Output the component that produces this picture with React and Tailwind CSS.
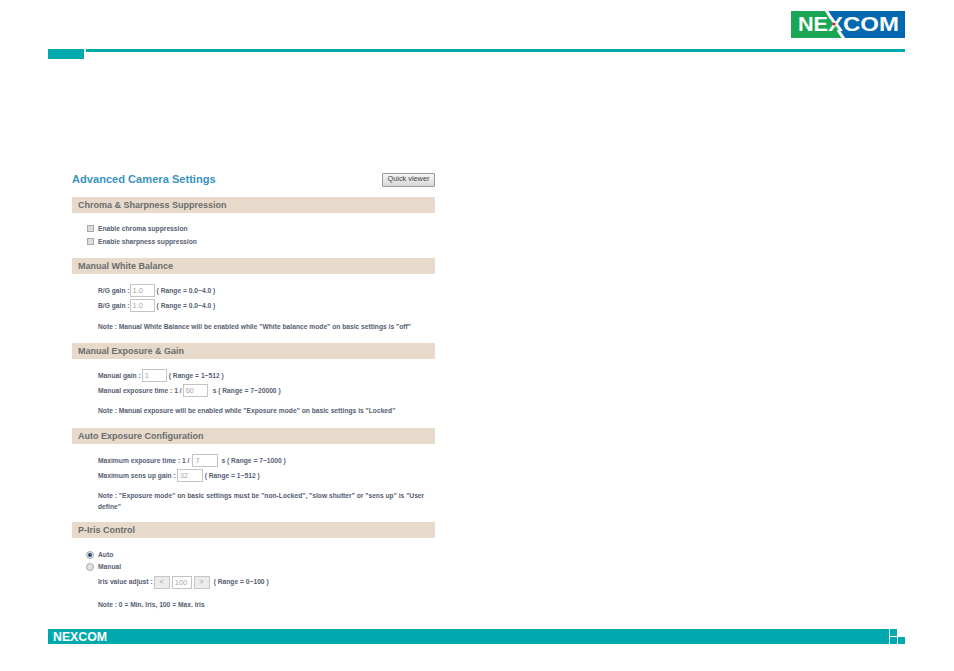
// Advanced Camera Settings manual page
const logoFont = "Liberation Sans, sans-serif";

function Logo({ small }) {
  if (small) {
    return (
      <svg width="60" height="15" viewBox="0 0 60 15">
        <text x="4" y="12" fontFamily={logoFont} fontWeight="700" fontSize="12" fill="#fff" textLength="54" lengthAdjust="spacingAndGlyphs">NEXCOM</text>
      </svg>
    );
  }
  return (
    <svg width="114" height="27" viewBox="0 0 114 27" className="block">
      <rect width="114" height="27" fill="#0067b1" />
      <polygon points="0,0 36,0 53,27 0,27" fill="#1aa655" />
      <line x1="35" y1="-1" x2="40" y2="7" stroke="#fff" strokeWidth="3" />
      <line x1="47" y1="19" x2="53" y2="28" stroke="#fff" strokeWidth="3" />
      <g fontFamily={logoFont} fontWeight="700" fontSize="19.5" fill="#fff">
        <text x="7" y="20" textLength="30" lengthAdjust="spacingAndGlyphs">NE</text>
        <text x="37" y="20" textLength="15" lengthAdjust="spacingAndGlyphs">X</text>
        <text x="52" y="20" textLength="56" lengthAdjust="spacingAndGlyphs">COM</text>
      </g>
      <circle cx="43" cy="13" r="1.6" fill="#ed1c24" />
    </svg>
  );
}

function Bar({ children }) {
  return (
    <div className="h-4 bg-[#e8dacb] pl-[6px] pt-[1px] flex items-center text-[9px] font-bold text-[#6a6c6e]">
      {children}
    </div>
  );
}

function Row({ children, height = "h-[15px]", className = "" }) {
  return <div className={`flex items-center pt-[2px] ${height} text-[6.7px] font-bold text-[#566072] whitespace-pre ${className}`}>{children}</div>;
}

function Field({ value, width = "w-[25px]", className = "" }) {
  return (
    <span className={`inline-flex items-center h-[13px] ${width} ${className} border border-[#c4c4c4] bg-white pl-[2px] text-[7.5px] font-normal text-[#a8a8a8]`}>
      {value}
    </span>
  );
}

function SmallBtn({ children }) {
  return (
    <span className="inline-flex items-center justify-center w-4 h-[13px] border border-[#c8c8c8] bg-[#ececec] text-[7px] font-normal text-[#999]">
      {children}
    </span>
  );
}

function Check() {
  return <span className="w-[7px] h-[7px] -mt-[2px] border border-[#a9a9a9] bg-[#dcdcdc] mr-[4px] ml-[1px]" />;
}

function Radio({ on }) {
  return (
    <span className="w-2 h-2 rounded-full border border-[#a9a9a9] bg-[#e2e2e2] mr-[4px] flex items-center justify-center">
      {on && <span className="w-1 h-1 rounded-full bg-[#2b4f78]" />}
    </span>
  );
}

export default function App() {
  return (
    <div className="w-[954px] h-[671px] bg-white flex flex-col px-[48px] pt-[11px] font-['Liberation_Sans',Arial,sans-serif]">
      <div className="flex justify-end h-[27px] mr-[1px]"><Logo /></div>
      <div className="flex mt-[11px] gap-[2px] mr-[1px]">
        <div className="w-9 h-[10px] bg-[#00a9ad]" />
        <div className="flex-1 h-[3px] bg-[#00a9ad]" />
      </div>

      <div className="w-[363px] ml-[24px] mt-[113px] h-[457px]">
        <div className="flex items-center justify-between h-[15px] mb-[10px]">
          <h1 className="text-[11.1px] font-bold text-[#3b93c0]">Advanced Camera Settings</h1>
          <button className="w-[53px] h-[14px] border border-[#9a9a9a] rounded-[1px] bg-gradient-to-b from-[#f4f4f4] to-[#d8d8d8] text-[7.3px] text-[#444]">Quick viewer</button>
        </div>

        <Bar>Chroma &amp; Sharpness Suppression</Bar>
        <div className="pl-[14px] pt-[9px] h-[45px]">
          <Row height="h-[13px]"><Check />Enable chroma suppression</Row>
          <Row height="h-[13px]"><Check />Enable sharpness suppression</Row>
        </div>

        <Bar>Manual White Balance</Bar>
        <div className="pl-[26px] pt-[9px] h-[69px]">
          <Row>R/G gain :<Field value="1.0" className="-mt-[2px]" /><span className="ml-[2px]">( Range = 0.0~4.0 )</span></Row>
          <Row>B/G gain :<Field value="1.0" className="-mt-[2px]" /><span className="ml-[2px]">( Range = 0.0~4.0 )</span></Row>
          <Row className="mt-[6px]">Note : Manual White Balance will be enabled while "White balance mode" on basic settings is "off"</Row>
        </div>

        <Bar>Manual Exposure &amp; Gain</Bar>
        <div className="pl-[26px] pt-[9px] h-[69px]">
          <Row>Manual gain :<Field value="1" className="ml-[1px] -mt-[2px]" /><span className="ml-[2px]">( Range = 1~512 )</span></Row>
          <Row>Manual exposure time : 1 /<Field value="60" className="ml-[1px] -mt-[2px]" /><span className="ml-[5px]">s ( Range = 7~20000 )</span></Row>
          <Row className="mt-[5px]">Note : Manual exposure will be enabled while "Exposure mode" on basic settings is "Locked"</Row>
        </div>

        <Bar>Auto Exposure Configuration</Bar>
        <div className="pl-[26px] pt-[9px] h-[78px]">
          <Row>Maximum exposure time : 1 /<Field value="7" width="w-[26px]" className="ml-[3px] -mt-[2px]" /><span className="ml-[3px]">s ( Range = 7~1000 )</span></Row>
          <Row>Maximum sens up gain :<Field value="32" width="w-[26px]" className="ml-[1px] -mt-[2px]" /><span className="ml-[2px]">( Range = 1~512 )</span></Row>
          <p className="mt-[7px] w-[337px] text-[6.7px] leading-[11px] font-bold text-[#566072]">
            Note : "Exposure mode" on basic settings must be "non-Locked", "slow shutter" or "sens up" is "User define"
          </p>
        </div>

        <Bar>P-Iris Control</Bar>
        <div className="pl-[14px] pt-[10px]">
          <Row height="h-[12px]"><Radio on />Auto</Row>
          <Row height="h-[12px]"><Radio />Manual</Row>
          <Row className="ml-[12px] mt-[2px] gap-[2px]">
            <span className="-mr-[1px]">Iris value adjust :</span>
            <SmallBtn>&lt;</SmallBtn>
            <Field value="100" width="w-5" />
            <SmallBtn>&gt;</SmallBtn>
            <span className="ml-[2px]">( Range = 0~100 )</span>
          </Row>
          <Row className="ml-[12px] mt-[8px]">Note : 0 = Min. Iris, 100 = Max. Iris</Row>
        </div>
      </div>

      <div className="flex gap-[1px] mr-[1px] h-[15px]">
        <div className="flex-1 bg-[#00a9ad] pl-[1px]"><Logo small /></div>
        <div className="w-[15px] grid grid-cols-2 gap-[1px] content-between">
          <div className="h-[7px] bg-[#00a9ad]" />
          <div />
          <div className="h-[7px] bg-[#00a9ad]" />
          <div className="h-[7px] bg-[#00a9ad]" />
        </div>
      </div>
    </div>
  );
}
